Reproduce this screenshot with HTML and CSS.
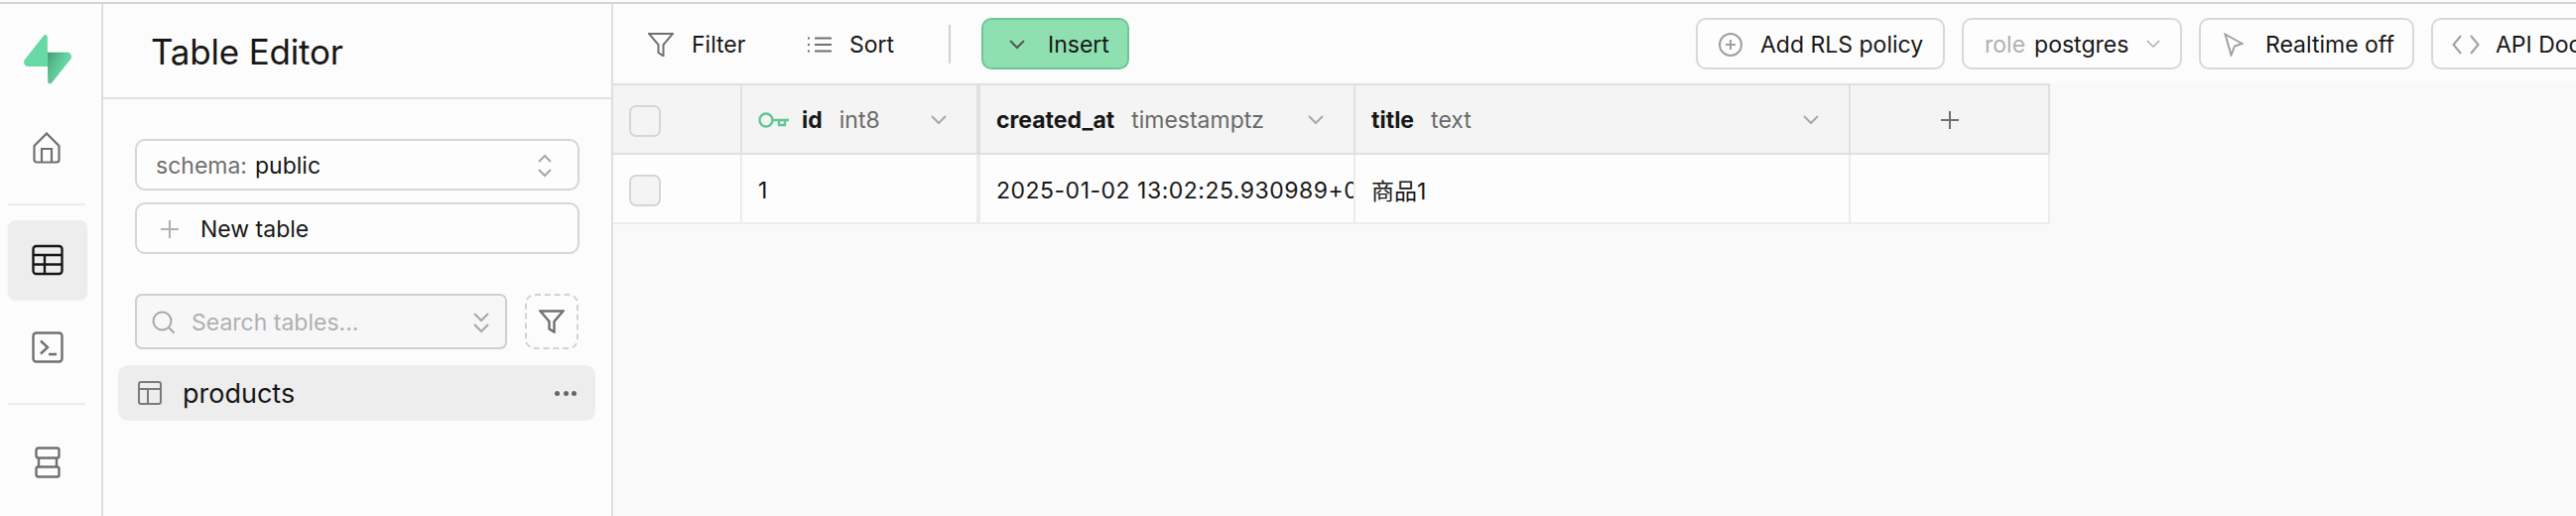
FILE: index.html
```html
<!DOCTYPE html>
<html lang="en">
<head>
<meta charset="utf-8">
<title>Table Editor</title>
<link rel="stylesheet" href="styles.css">
</head>
<body>
<svg class="defs" width="0" height="0" aria-hidden="true">
  <defs>
    <linearGradient id="lg1" x1="53.97" y1="54.97" x2="94.16" y2="71.83" gradientUnits="userSpaceOnUse"><stop stop-color="#249361"/><stop offset="1" stop-color="#3ECF8E"/></linearGradient>
    <linearGradient id="lg2" x1="36.16" y1="30.58" x2="54.48" y2="65.08" gradientUnits="userSpaceOnUse"><stop/><stop offset="1" stop-opacity="0"/></linearGradient>
  </defs>
</svg>
<div class="app">
  <nav class="rail">
    <svg class="logo" viewBox="0 0 109 113"><path d="M63.7 110.3C60.8 113.9 55.1 111.9 55 107.3L54 40.1H99.2C107.4 40.1 112 49.5 106.9 55.9L63.7 110.3Z" fill="url(#lg1)"/><path d="M63.7 110.3C60.8 113.9 55.1 111.9 55 107.3L54 40.1H99.2C107.4 40.1 112 49.5 106.9 55.9L63.7 110.3Z" fill="url(#lg2)" fill-opacity=".2"/><path d="M45.3 2.1C48.2-1.5 54-.4 54 5L54.5 72.3H9.8C1.6 72.3-2.9 62.8 2.2 56.4L45.3 2.1Z" fill="#3ECF8E"/></svg>
    <div class="rail-item home"><svg class="ic-home" viewBox="0 0 28 32"><path d="M1.5 14 14 1.5 26.5 14v14a2.5 2.5 0 0 1-2.500 2.500h-20A2.500 2.500 0 0 1 1.500 28zM9 30.500V17h10v13.500"/></svg></div>
    <div class="rail-sep first"></div>
    <div class="rail-item active"><svg class="ic-table" viewBox="0 0 32 32"><rect x="1.500" y="2" width="29" height="28" rx="3"/><path d="M1.500 11h29M1.500 20.500h29M13 11v19"/></svg></div>
    <div class="rail-item term"><svg class="ic-term" viewBox="0 0 32 32"><rect x="1.500" y="1.500" width="29" height="29" rx="3"/><path d="m9 9.500 7 6.500-7 6.500M17 23h8"/></svg></div>
    <div class="rail-sep second"></div>
    <div class="rail-item store"><svg class="ic-store" viewBox="0 0 26 32"><rect x="1.500" y="1.500" width="23" height="10" rx="2"/><rect x="1.500" y="20.500" width="23" height="10" rx="2"/><path d="M4 11.500v9M22 11.500v9"/></svg></div>
  </nav>

  <aside class="side">
    <header class="side-head"><h1 class="side-title">Table Editor</h1></header>
    <div class="side-body">
      <div class="field">
        <span class="muted">schema:</span><span class="val">public</span>
        <svg class="ic-updown" viewBox="0 0 16 24"><path d="m2 8 6-6 6 6M2 16l6 6 6-6"/></svg>
      </div>
      <div class="field newtable">
        <svg class="ic-plus" viewBox="0 0 20 20"><path d="M10 1v18M1 10h18"/></svg><span class="val">New table</span>
      </div>
      <div class="search-row">
        <div class="search">
          <svg class="ic-search" viewBox="0 0 24 24"><circle cx="10.500" cy="10.500" r="9"/><path d="m17 17 5.500 5.500"/></svg>
          <span class="placeholder">Search tables...</span>
          <svg class="ic-dchev" viewBox="0 0 18 22"><path d="m2 2 7 7 7-7M2 13l7 7 7-7"/></svg>
        </div>
        <div class="dash"><svg class="ic-funnel" viewBox="0 0 26 24"><path d="M1.500 1.500h23l-9 10.500v10.500l-5-3V12z"/></svg></div>
      </div>
      <div class="tbl-item">
        <svg class="ic-tbl" viewBox="0 0 24 24"><rect x="1" y="1" width="22" height="22" rx="2"/><path d="M1 8h22M10 8v15"/></svg>
        <span class="tbl-name">products</span>
        <span class="dots"><i></i><i></i><i></i></span>
      </div>
    </div>
  </aside>

  <main class="main">
    <div class="toolbar">
      <div class="tools-left">
        <span class="tool filter"><svg class="ic-filter" viewBox="0 0 26 24"><path d="M1 1h24l-9.500 11v11.500l-5-3.500v-8z"/></svg>Filter</span>
        <span class="tool sort"><svg class="ic-sort" viewBox="0 0 24 16"><path d="M7 1.500h17M7 8h17M7 14.500h17M0 1.500h2M0 8h2M0 14.500h2"/></svg>Sort</span>
        <span class="vsep"></span>
        <span class="insert"><svg class="ic-chev" viewBox="0 0 16 10"><path d="m1 1 7 7 7-7"/></svg>Insert</span>
      </div>
      <div class="tools-right">
        <span class="btn rls"><svg class="ic-add" viewBox="0 0 24 24"><circle cx="12" cy="12" r="11"/><path d="M12 7v10M7 12h10"/></svg>Add RLS policy</span>
        <span class="btn role"><span class="role-l">role</span><span>postgres</span><svg class="ic-chev small" viewBox="0 0 16 10"><path d="m1 1 7 7 7-7"/></svg></span>
        <span class="btn rt"><svg class="ic-pointer" viewBox="0 0 20 24"><path d="M1.500 1.500 18.500 11 11 13.500 7.500 22.500z"/></svg>Realtime off</span>
        <span class="btn api"><svg class="ic-code" viewBox="0 0 28 22"><path d="M9 2 1.500 11 9 20M19 2l7.500 9L19 20"/></svg>API Docs</span>
      </div>
    </div>

    <div class="grid">
      <div class="cell hd cb"><span class="check"></span></div>
      <div class="cell hd idc">
        <svg class="ic-key" viewBox="0 0 32 18"><circle cx="8" cy="9" r="6.500"/><path d="M14.500 9H31M21 9v5h6V9"/></svg>
        <b>id</b><span class="type">int8</span><svg class="ic-chev hdc" viewBox="0 0 16 10"><path d="m1 1 7 7 7-7"/></svg>
      </div>
      <div class="cell hd cr">
        <b>created_at</b><span class="type">timestamptz</span><svg class="ic-chev hdc" viewBox="0 0 16 10"><path d="m1 1 7 7 7-7"/></svg>
      </div>
      <div class="cell hd ti">
        <b>title</b><span class="type">text</span><svg class="ic-chev hdc" viewBox="0 0 16 10"><path d="m1 1 7 7 7-7"/></svg>
      </div>
      <div class="cell hd add"><svg class="ic-plus dark" viewBox="0 0 20 20"><path d="M10 1v18M1 10h18"/></svg></div>

      <div class="cell rw cb"><span class="check"></span></div>
      <div class="cell rw idc">1</div>
      <div class="cell rw cr clip">2025-01-02 13:02:25.930989+00</div>
      <div class="cell rw ti">商品1</div>
      <div class="cell rw add"></div>
    </div>
  </main>
</div>
</body>
</html>
```
FILE: styles.css
```css
* { box-sizing: border-box; }
html, body { margin: 0; height: 100%; overflow: hidden; background: #fcfcfc; }
body { padding-top: 2px; font-family: Inter, "Noto Sans CJK SC", sans-serif; font-size: 23px; color: #171717; }
.defs { position: absolute; }
svg { display: block; flex: none; fill: none; stroke: #707070; stroke-width: 2; }

.app { display: flex; height: 518px; border-top: 2px solid #d4d4d4; }

/* rail */
.rail { width: 104px; flex: none; border-right: 2px solid #dedede; display: flex; flex-direction: column; align-items: flex-start; padding: 31px 0 0 8px; }
.logo { width: 48px; height: 50px; margin-left: 16px; stroke: none; opacity: .78; }
.rail-item { width: 80px; display: flex; justify-content: center; }
.home { margin-top: 48px; }
.ic-home { width: 28px; height: 32px; margin-left: -2px; stroke-width: 2.200; }
.rail-sep { width: 78px; height: 2px; background: #ececec; }
.rail-sep.first { margin-top: 40px; }
.rail-item.active { margin-top: 15px; height: 80px; background: #ededed; border-radius: 8px; box-shadow: 0 1px 2px rgba(0,0,0,.06); align-items: center; }
.ic-table { width: 32px; height: 32px; stroke: #171717; stroke-width: 2.400; }
.term { margin-top: 32px; }
.ic-term { width: 32px; height: 32px; stroke-width: 2.400; }
.rail-sep.second { margin-top: 40px; }
.store { margin-top: 42px; }
.ic-store { width: 26px; height: 32px; stroke-width: 2.400; }

/* side */
.side { width: 514px; flex: none; border-right: 2px solid #dedede; display: flex; flex-direction: column; }
.side-head { height: 96px; flex: none; border-bottom: 2px solid #e2e2e2; padding: 28px 0 0 48px; }
.side-title { margin: 0; font-size: 35px; line-height: 40px; font-weight: 400; letter-spacing: -.2px; }
.side-body { padding: 40px 32px 0 32px; display: flex; flex-direction: column; }
.field { height: 52px; border: 2px solid #d6d6d6; border-radius: 10px; display: flex; align-items: center; padding: 2px 25px 0 19px; background: #fdfdfd; }
.muted { color: #6f6f6f; margin-right: 8px; }
.val { color: #171717; }
.ic-updown { width: 16px; height: 24px; margin-left: auto; stroke: #a8a8a8; }
.newtable { margin-top: 12px; padding-left: 23px; }
.ic-plus { width: 20px; height: 20px; stroke: #b0b0b0; margin-right: 21px; }
.ic-plus.dark { stroke: #707070; margin: 0; }
.search-row { display: flex; gap: 18px; margin-top: 40px; }
.search { width: 375px; height: 56px; border: 2px solid #cfcfcf; border-radius: 7px; background: #f7f7f7; display: flex; align-items: center; padding: 2px 15px 0; }
.ic-search { width: 24px; height: 24px; stroke: #a6a6a6; margin-right: 16px; }
.placeholder { color: #b0b0b0; }
.ic-dchev { width: 18px; height: 22px; margin-left: auto; stroke: #a6a6a6; }
.dash { width: 54px; height: 56px; border: 2px dashed #d2d2d2; border-radius: 10px; display: flex; align-items: center; justify-content: center; }
.ic-funnel { width: 26px; height: 24px; stroke-width: 2.400; }
.tbl-item { margin: 16px -16px 0 -17px; height: 56px; background: #ededed; border-radius: 10px; display: flex; align-items: center; padding: 0 19px 0 20px; font-size: 27px; }
.ic-tbl { width: 24px; height: 24px; margin-right: 21px; stroke: #7a7a7a; }
.tbl-name { color: #171717; }
.dots { margin-left: auto; display: flex; gap: 3.500px; }
.dots i { width: 5px; height: 5px; border-radius: 50%; background: #666; }

/* main */
.main { flex: 1; min-width: 0; display: flex; flex-direction: column; overflow: hidden; background: #f9f9f9; }
.toolbar { height: 80px; flex: none; display: flex; align-items: flex-start; padding-top: 14px; background: #fcfcfc; }
.tools-left { width: 1091px; flex: none; display: flex; align-items: center; height: 52px; padding-left: 35px; }
.tool { display: flex; align-items: center; padding-top: 1px; }
.ic-filter { width: 26px; height: 24px; margin-right: 18px; }
.ic-sort { width: 24px; height: 16px; margin-right: 18px; }
.filter { width: 161px; }
.sort { width: 142px; }
.vsep { width: 2px; height: 39px; background: #d0d0d0; margin-right: 31px; }
.insert { width: 149px; height: 52px; background: #8fe0b0; border: 2px solid #6dc596; border-radius: 10px; display: flex; align-items: center; padding: 1px 0 0 26px; }
.ic-chev { width: 16px; height: 10px; stroke: #555; margin-right: 23px; }
.tools-right { display: flex; flex: none; gap: 17px; }
.btn { height: 52px; border: 2px solid #d8d8d8; border-radius: 10px; display: flex; align-items: center; background: #fdfdfd; white-space: nowrap; padding: 1px 0 0 21px; }
.rls { width: 251px; }
.ic-add { width: 24px; height: 24px; stroke: #a0a0a0; margin-right: 18px; }
.role { width: 222px; }
.role-l { color: #b0b0b0; margin-right: 9px; }
.ic-chev.small { width: 14px; height: 9px; margin: 0 0 0 18px; stroke: #a8a8a8; stroke-width: 1.600; }
.rt { width: 217px; padding-left: 23px; }
.ic-pointer { width: 20px; height: 24px; stroke: #a0a0a0; margin-right: 22px; }
.api { width: 200px; padding-left: 19px; }
.ic-code { width: 28px; height: 22px; stroke: #a0a0a0; margin-right: 16px; }

.grid { display: grid; grid-template-columns: 130px 238px 380px 499px 201px; grid-auto-rows: 70px; width: 1448px; border-top: 2px solid #e0e0e0; }
.cell { display: flex; align-items: center; min-width: 0; padding-left: 16px; }
.hd { background: #f4f4f4; border-bottom: 2px solid #e0e0e0; border-right: 2px solid #e0e0e0; padding-top: 1px; }
.rw { background: #fdfdfd; border-bottom: 2px solid #ececec; border-right: 2px solid #ececec; padding-top: 3px; }
.rw.ti { padding-top: 1px; }
.check { width: 32px; height: 32px; border: 2px solid #d6d6d6; border-radius: 7px; background: #f4f4f4; }
.cb { padding-top: 3px; }
.ic-key { width: 32px; height: 18px; stroke: #5fc792; stroke-width: 2.400; margin-right: 12px; }
.hd b { font-weight: 700; }
.type { color: #6a6a6a; margin-left: 17px; }
.hdc { margin-left: auto; margin-right: 30px; stroke: #a8a8a8; }
.cr.hd { border-left: 2px solid #e0e0e0; }
.cr.rw { border-left: 2px solid #ececec; }
.add { justify-content: center; padding-left: 0; }
.clip { overflow: hidden; white-space: nowrap; letter-spacing: .5px; }
```
